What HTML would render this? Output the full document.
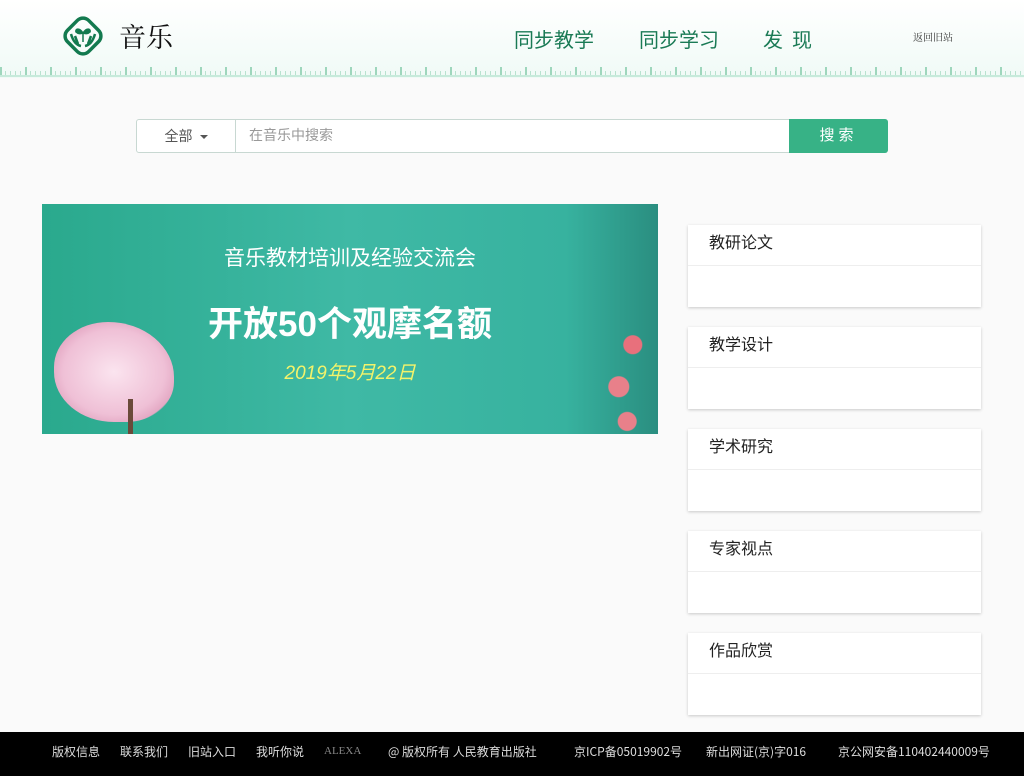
<!DOCTYPE html>
<html><head><meta charset="utf-8">
<style>
*{margin:0;padding:0;box-sizing:border-box}
body{width:1024px;height:776px;background:#fafafa;font-family:"Liberation Sans","Noto Sans CJK SC",sans-serif;position:relative;overflow:hidden}
.hdr{position:absolute;left:0;top:0;width:1024px;height:78px;background:linear-gradient(#fff,#f0faf6)}
.ruler{position:absolute;left:0;top:67px;width:1024px;height:10px;
background:
repeating-linear-gradient(90deg,#9ed6bc 0 2px,transparent 2px 25px) 0 0/100% 10px no-repeat,
repeating-linear-gradient(90deg,#b8e2cf 0 1px,transparent 1px 5px) 0 4px/100% 6px no-repeat;border-bottom:2px solid #c7eadb}
.logo{position:absolute;left:61px;top:14px}
.title{position:absolute;left:119px;top:16px;font-size:27px;font-family:"Noto Serif CJK SC",serif;color:#111}
.nav{position:absolute;top:24px;font-size:20px;color:#1a7a55;font-family:"Noto Sans CJK SC",sans-serif}
.back{position:absolute;left:913px;top:29px;font-size:10px;color:#333;font-family:"Noto Serif CJK SC",serif}
.search{position:absolute;left:136px;top:119px;width:752px;height:34px;border:1px solid #c8d8d2;border-radius:3px;background:#fff}
.sel{position:absolute;left:0;top:0;width:99px;height:32px;border-right:1px solid #c8d8d2;font-size:14px;color:#555;text-align:center;line-height:32px}
.sel i{display:inline-block;width:0;height:0;border-left:4px solid transparent;border-right:4px solid transparent;border-top:4px solid #555;vertical-align:middle;margin-left:7px}
.ph{position:absolute;left:112px;top:0;line-height:30px;font-size:14px;color:#999}
.btn{position:absolute;right:-1px;top:-1px;width:99px;height:34px;background:#37b286;color:#fff;font-size:15px;text-align:center;line-height:34px;border-radius:0 3px 3px 0;letter-spacing:4px}
.banner{position:absolute;left:42px;top:204px;width:616px;height:230px;background:linear-gradient(90deg,#2aa98d,#3fb9a5 50%,#37b29f 85%,#2a8e80);overflow:hidden}
.b1{position:absolute;left:0;width:616px;text-align:center;color:#fff}
.card{position:absolute;left:688px;width:293px;height:82px;background:#fff;box-shadow:0 1px 3px rgba(0,0,0,.2)}
.card div{height:41px;border-bottom:1px solid #eee;padding-left:21px;line-height:38px;font-size:16px;color:#222}
.ft{position:absolute;left:0;top:732px;width:1024px;height:44px;background:#000;color:#ddd;font-size:12px;font-family:"Noto Sans CJK SC",sans-serif}
.ft span{position:absolute;top:11px}
</style></head><body>
<div class="hdr"></div>
<div class="ruler"></div>
<svg class="logo" width="44" height="44" viewBox="0 0 44 44"><rect x="7" y="7" width="30" height="30" rx="8" transform="rotate(45 22 22)" fill="none" stroke="#137a4f" stroke-width="3.5"/><path d="M22 28 V18 M22 19 C18 13 14 15 15 18 C17 20 20 20 22 19 C24 20 27 20 29 18 C30 15 26 13 22 19" fill="#137a4f" stroke="#137a4f" stroke-width="1.5"/><path d="M10 20 C12 27 15 31 20 32 M34 20 C32 27 29 31 24 32 M14 22 L17 30 M30 22 L27 30" stroke="#137a4f" stroke-width="2.5" fill="none"/></svg>
<div class="title">音乐</div>
<div class="nav" style="left:514px">同步教学</div>
<div class="nav" style="left:639px">同步学习</div>
<div class="nav" style="left:763px">发&nbsp;&nbsp;现</div>
<div class="back">返回旧站</div>
<div class="search"><div class="sel">全部<i></i></div><div class="ph">在音乐中搜索</div><div class="btn">搜索</div></div>
<div class="banner">
<div class="b1" style="top:38px;font-size:21px">音乐教材培训及经验交流会</div>
<div class="b1" style="top:92px;font-size:35px;font-weight:bold">开放50个观摩名额</div>
<div class="b1" style="top:154px;font-size:19px;color:#f3f36a;font-style:italic">2019年5月22日</div>
<div style="position:absolute;left:12px;top:118px;width:120px;height:100px;border-radius:45% 55% 40% 50%;background:radial-gradient(#fbe4ef,#efc0d6 60%,#e4a9c4 75%,transparent 77%)"></div>
<div style="position:absolute;left:86px;top:195px;width:5px;height:35px;background:#6a4a3a"></div>
<div style="position:absolute;left:560px;top:125px;width:56px;height:105px;background:radial-gradient(circle at 55% 15%,#e8707c 9px,transparent 10px),radial-gradient(circle at 30% 55%,#e8808a 10px,transparent 11px),radial-gradient(circle at 45% 88%,#e8808a 9px,transparent 10px)"></div>
</div>
<div class="card" style="top:225px"><div>教研论文</div></div>
<div class="card" style="top:327px"><div>教学设计</div></div>
<div class="card" style="top:429px"><div>学术研究</div></div>
<div class="card" style="top:531px"><div>专家视点</div></div>
<div class="card" style="top:633px"><div>作品欣赏</div></div>
<div class="ft">
<span style="left:52px">版权信息</span><span style="left:120px">联系我们</span><span style="left:188px">旧站入口</span><span style="left:256px">我听你说</span><span style="left:324px;top:13px;color:#888;font-size:11px;font-family:'Liberation Serif',serif">ALEXA</span>
<span style="left:388px">@ 版权所有 人民教育出版社</span><span style="left:574px">京ICP备05019902号</span><span style="left:706px">新出网证(京)字016</span><span style="left:838px">京公网安备110402440009号</span>
</div>
</body></html>
